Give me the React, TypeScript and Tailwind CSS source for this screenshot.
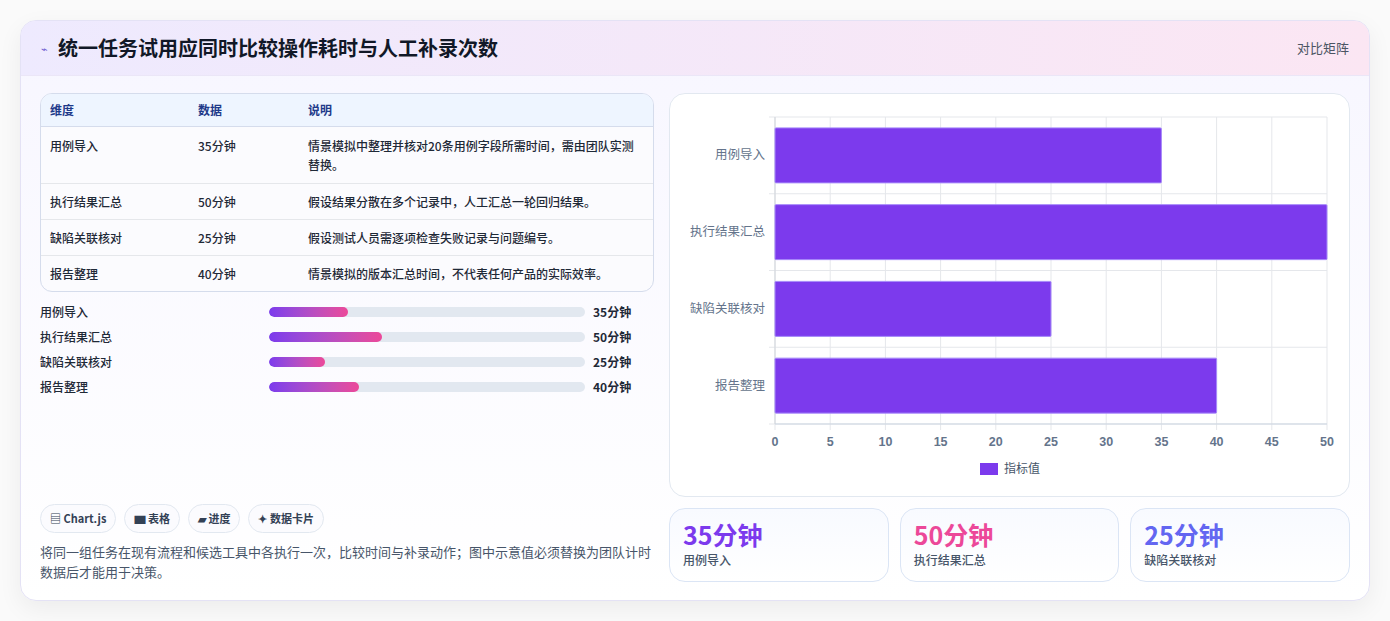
import React from "react";

const rows = [
  { k: "用例导入", v: 35, d: "情景模拟中整理并核对20条用例字段所需时间，需由团队实测替换。" },
  { k: "执行结果汇总", v: 50, d: "假设结果分散在多个记录中，人工汇总一轮回归结果。" },
  { k: "缺陷关联核对", v: 25, d: "假设测试人员需逐项检查失败记录与问题编号。" },
  { k: "报告整理", v: 40, d: "情景模拟的版本汇总时间，不代表任何产品的实际效率。" },
];

function Chart() {
  const x0 = 105, x1 = 657, y0 = 23, y1 = 330;
  const sx = (v: number) => x0 + ((x1 - x0) * v) / 50;
  const band = (y1 - y0) / 4;
  return (
    <svg width="680" height="403" className="block">
      {Array.from({ length: 11 }, (_, i) => (
        <line key={i} x1={sx(i * 5)} x2={sx(i * 5)} y1={y0} y2={y1 + 6} stroke="#e5e7eb" />
      ))}
      {[0, 1, 2, 3, 4].map((i) => (
        <line key={i} x1={x0 - 6} x2={x1} y1={y0 + band * i} y2={y0 + band * i} stroke="#e5e7eb" />
      ))}
      <line x1={x0} x2={x0} y1={y0} y2={y1} stroke="#d1d5db" />
      <line x1={x0} x2={x1} y1={y1} y2={y1} stroke="#cbd5e1" />
      {rows.map((r, i) => {
        const yc = y0 + band * i + band / 2;
        return (
          <g key={r.k}>
            <rect x={x0} y={yc - 27.5} width={sx(r.v) - x0} height={55} fill="#7c3aed" stroke="#a78bfa" rx={1} />
            <text x={x0 - 10} y={yc + 4} textAnchor="end" fontSize="12.5" fill="#64748b" fontFamily="Noto Sans CJK SC, sans-serif">{r.k}</text>
          </g>
        );
      })}
      {Array.from({ length: 11 }, (_, i) => (
        <text key={i} x={sx(i * 5)} y={y1 + 22} textAnchor="middle" fontSize="12.5" fontWeight="bold" fill="#64748b" fontFamily="Liberation Sans, sans-serif">{i * 5}</text>
      ))}
      <rect x={310} y={369} width={18} height={12} fill="#7c3aed" />
      <text x={334} y={379} fontSize="12" fill="#475569" fontFamily="Noto Sans CJK SC, sans-serif">指标值</text>
    </svg>
  );
}

export default function App() {
  return (
    <div className="min-h-[621px] bg-[#fafafa] pt-5 px-5 pb-5" style={{ fontFamily: "'Noto Sans CJK SC', 'Noto Sans', sans-serif" }}>
      <div className="w-[1350px] rounded-2xl border border-[#e4e2f5] bg-gradient-to-b from-[#f7f6ff] to-white shadow-[0_8px_24px_rgba(0,0,0,0.06)] overflow-hidden">
        <div className="h-[55px] flex items-center justify-between px-5 bg-gradient-to-r from-[#eeeafe] to-[#fbe6f3] border-b border-[#ebe6f7]">
          <div className="flex items-center gap-2.5">
            <span className="text-[#6d5bd0] text-[11px]">⌁</span>
            <h1 className="text-[20px] font-bold text-[#111827]">统一任务试用应同时比较操作耗时与人工补录次数</h1>
          </div>
          <span className="text-[13px] text-[#4b5563]">对比矩阵</span>
        </div>
        <div className="flex gap-[15px] px-[19px] pt-[17px] pb-[18px]">
          <div className="w-[616px] flex flex-col">
            <div className="rounded-xl border border-[#d5dcec] overflow-hidden bg-[#fbfbfe]">
              <div className="grid grid-cols-[148px_110px_1fr] h-[33px] items-center bg-[#eef5ff] border-b border-[#d5dcec] px-[9px] text-[12px] font-bold text-[#1e3a8a]">
                <span>维度</span><span>数据</span><span>说明</span>
              </div>
              {rows.map((r, i) => (
                <div key={r.k} className={`grid grid-cols-[148px_110px_1fr] px-[9px] text-[12px] text-[#1f2937] font-medium ${i < 3 ? "border-b border-[#e5e7eb]" : ""} ${i === 0 ? "py-[9px] leading-[19px]" : "py-[8px] leading-[19px]"}`}>
                  <span>{r.k}</span><span>{r.v}分钟</span><span>{r.d}</span>
                </div>
              ))}
            </div>
            <div className="mt-[10px] flex flex-col gap-[6px]">
              {rows.map((r) => (
                <div key={r.k} className="flex items-center h-[19px] text-[12px] text-[#1f2937]">
                  <span className="w-[229px] font-medium">{r.k}</span>
                  <div className="w-[316px] h-[10px] rounded-full bg-[#e2e8f0] overflow-hidden">
                    <div className="h-full rounded-full bg-gradient-to-r from-[#7c3aed] to-[#ec4899]" style={{ width: `${(r.v / 140) * 100}%` }} />
                  </div>
                  <span className="ml-2 font-bold">{r.v}分钟</span>
                </div>
              ))}
            </div>
            <div className="mt-auto flex gap-2 text-[11px] font-bold text-[#334155]">
              {["▤ Chart.js", "▆ 表格", "▰ 进度", "✦ 数据卡片"].map((c) => (
                <span key={c} className="h-[29px] px-[9px] flex items-center rounded-full border border-[#e2e8f0] bg-[#fbfbfe]">{c}</span>
              ))}
            </div>
            <p className="mt-[9px] text-[13px] leading-[20px] text-[#475569]">将同一组任务在现有流程和候选工具中各执行一次，比较时间与补录动作；图中示意值必须替换为团队计时数据后才能用于决策。</p>
          </div>
          <div className="w-[681px] flex flex-col gap-[11px]">
            <div className="h-[404px] rounded-2xl border border-[#e2e8f0] bg-white overflow-hidden"><Chart /></div>
            <div className="grid grid-cols-3 gap-[11px]">
              {[
                { v: "35分钟", l: "用例导入", c: "text-[#7c3aed]" },
                { v: "50分钟", l: "执行结果汇总", c: "text-[#ec4899]" },
                { v: "25分钟", l: "缺陷关联核对", c: "text-[#6366f1]" },
              ].map((s) => (
                <div key={s.l} className="h-[74px] rounded-2xl border border-[#dbe5f5] bg-gradient-to-b from-[#f8faff] to-white px-[13px] pt-[8px]">
                  <div className={`text-[25px] font-bold leading-[34px] ${s.c}`}>{s.v}</div>
                  <div className="text-[12px] text-[#475569] font-medium">{s.l}</div>
                </div>
              ))}
            </div>
          </div>
        </div>
      </div>
    </div>
  );
}
